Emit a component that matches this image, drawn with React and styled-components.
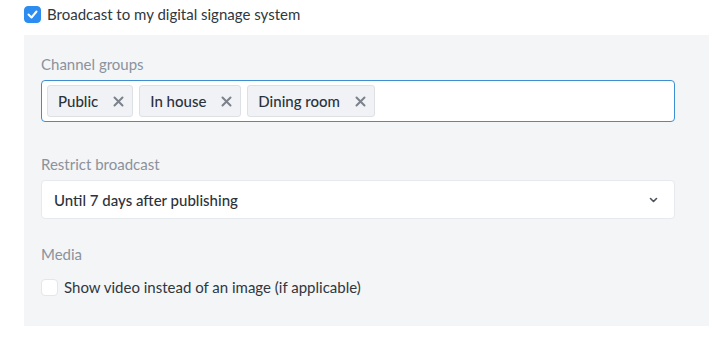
import styled, { createGlobalStyle } from 'styled-components';

const GlobalStyle = createGlobalStyle`
    body {
        margin: 0;
        background: #ffffff;
        font-family: Lato, "Noto Sans", sans-serif;
        color: #2b323b;
    }
`;

const Page = styled.div`
    padding: 4px 13px 0 24px;
`;

const CheckRow = styled.label`
    display: flex;
    align-items: center;
    gap: 6px;
    font-size: 15px;
    line-height: 20px;
    color: #2f3740;
    margin-top: ${(p) => p.$top || 0}px;
`;

const Box = styled.span`
    width: 17px;
    height: 17px;
    box-sizing: border-box;
    border-radius: 4px;
    display: flex;
    align-items: center;
    justify-content: center;
    background: ${(p) => (p.$checked ? '#2d8cf0' : '#ffffff')};
    border: 1px solid ${(p) => (p.$checked ? '#2d8cf0' : '#e3e6ea')};
    flex-shrink: 0;
`;

const Panel = styled.div`
    margin-top: 11px;
    background: #f4f5f7;
    padding: 19px 34px 29px 17px;
    display: flex;
    flex-direction: column;
`;

const Label = styled.div`
    font-size: 15px;
    line-height: 20px;
    color: #8a929c;
    margin-bottom: 6px;
    margin-top: ${(p) => p.$top || 0}px;
`;

const TagInput = styled.div`
    height: 42px;
    box-sizing: border-box;
    border: 1px solid #3d8fd1;
    border-radius: 4px;
    background: #ffffff;
    display: flex;
    align-items: center;
    gap: 6px;
    padding: 0 5px;
`;

const Tag = styled.span`
    display: flex;
    align-items: center;
    gap: 15px;
    height: 32px;
    box-sizing: border-box;
    padding: 0 8px 0 10px;
    background: #f0f2f5;
    border: 1px solid #dde1e6;
    border-radius: 3px;
    font-size: 15px;
    font-weight: 500;
    color: #2b323b;
`;

const Select = styled.div`
    height: 39px;
    box-sizing: border-box;
    background: #ffffff;
    border: 1px solid #e6e9ed;
    border-radius: 4px;
    display: flex;
    align-items: center;
    justify-content: space-between;
    padding: 0 16px 0 12px;
    font-size: 15px;
    font-weight: 500;
    color: #2b323b;
`;

const Cross = () => (
    <svg width="11" height="11" viewBox="0 0 11 11">
        <path d="M1.5 1.5l8 8M9.5 1.5l-8 8" stroke="#7b828b" strokeWidth="2" strokeLinecap="round" />
    </svg>
);

const Check = () => (
    <svg width="11" height="9" viewBox="0 0 11 9">
        <path d="M1.5 4.5l3 3 5-6" fill="none" stroke="#ffffff" strokeWidth="2" strokeLinecap="round" strokeLinejoin="round" />
    </svg>
);

const Chevron = () => (
    <svg width="9" height="6" viewBox="0 0 9 6">
        <path d="M1.5 1.5l3 3 3-3" fill="none" stroke="#4a525c" strokeWidth="1.6" strokeLinecap="round" strokeLinejoin="round" />
    </svg>
);

const groups = ['Public', 'In house', 'Dining room'];

export default function App() {
    return (
        <Page>
            <GlobalStyle />
            <CheckRow>
                <Box $checked><Check /></Box>
                Broadcast to my digital signage system
            </CheckRow>
            <Panel>
                <Label>Channel groups</Label>
                <TagInput>
                    {groups.map((g) => (
                        <Tag key={g}>{g}<Cross /></Tag>
                    ))}
                </TagInput>
                <Label $top={32}>Restrict broadcast</Label>
                <Select>
                    Until 7 days after publishing
                    <Chevron />
                </Select>
                <Label $top={25}>Media</Label>
                <CheckRow $top={7}>
                    <Box />
                    Show video instead of an image (if applicable)
                </CheckRow>
            </Panel>
        </Page>
    );
}
